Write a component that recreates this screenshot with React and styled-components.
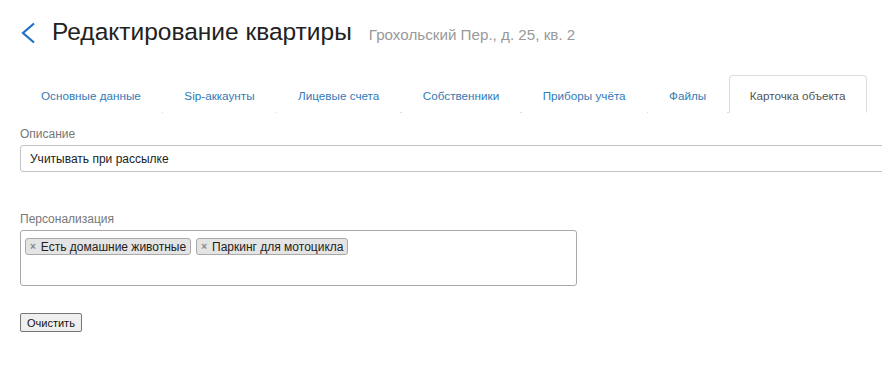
import React from 'react'
import styled, { createGlobalStyle } from 'styled-components'

const GlobalStyle = createGlobalStyle`
body{
    margin: 0;
    background: #fff;
    font-family: "Liberation Sans", Arial, sans-serif;
    overflow: hidden;
}
`

const tabs = ['Основные данные', 'Sip-аккаунты', 'Лицевые счета', 'Собственники', 'Приборы учёта', 'Файлы', 'Карточка объекта']
const tags = ['Есть домашние животные', 'Паркинг для мотоцикла']

function App() {
    return (
        <Page>
            <GlobalStyle />
            <Header>
                <BackLink href="#">
                    <svg width="16" height="22" viewBox="0 0 16 22">
                        <path d="M14 1.5 L3 11 L14 20.5" fill="none" stroke="#1f6fc5" strokeWidth="2.2" />
                    </svg>
                </BackLink>
                <Title>Редактирование квартиры</Title>
                <Subtitle>Грохольский Пер., д. 25, кв. 2</Subtitle>
            </Header>

            <Tabs>
                {tabs.map((t, i) => (
                    <Tab key={t} $active={i === tabs.length - 1}>{t}</Tab>
                ))}
            </Tabs>

            <Field>
                <Label>Описание</Label>
                <TextInput defaultValue="Учитывать при рассылке" />
            </Field>

            <Field $gap="40px">
                <Label>Персонализация</Label>
                <TagBox>
                    {tags.map(t => (
                        <Tag key={t}><span className="remove">×</span>{t}</Tag>
                    ))}
                </TagBox>
            </Field>

            <ClearButton>Очистить</ClearButton>
        </Page>
    )
}

export default App

const Page = styled.div`
padding: 0 20px;
width: 842px;
`

const Header = styled.div`
height: 64px;
display: flex;
align-items: center;
`

const BackLink = styled.a`
display: flex;
align-items: center;
width: 32px;
height: 22px;
margin-top: 1px;
`

const Title = styled.h1`
margin: 0;
font-size: 24.5px;
font-weight: 400;
color: #222;
white-space: nowrap;
`

const Subtitle = styled.span`
margin-left: 17px;
margin-top: 4px;
font-size: 15.2px;
color: #999;
white-space: nowrap;
`

const Tabs = styled.ul`
list-style: none;
margin: 11px 0 0;
padding: 0;
display: flex;
border-bottom: 1px solid #ddd;
`

const Tab = styled.li`
flex-shrink: 0;
white-space: nowrap;
margin-right: 1.5px;
margin-bottom: -1px;
padding: 12px 20px 9px;
font-size: 11.7px;
line-height: 15px;
color: ${p => p.$active ? '#555' : '#337ab7'};
border: 1px solid ${p => p.$active ? '#ddd' : 'transparent'};
border-bottom-color: ${p => p.$active ? '#fff' : 'transparent'};
border-radius: 4px 4px 0 0;
background: #fff;
cursor: pointer;
`

const Field = styled.div`
margin-top: ${p => p.$gap || '14px'};
display: flex;
flex-direction: column;
`

const Label = styled.label`
font-size: 12px;
color: #777;
margin-bottom: 4px;
`

const TextInput = styled.input`
box-sizing: border-box;
width: 880px;
height: 27px;
padding: 0 9px;
border: 1px solid #c4c4c4;
border-radius: 3px;
font-family: "Liberation Sans", Arial, sans-serif;
font-size: 12px;
color: #222;
outline: none;
`

const TagBox = styled.div`
box-sizing: border-box;
width: 557px;
height: 56px;
border: 1px solid #aaa;
border-radius: 3px;
padding: 7px 4px;
display: flex;
align-items: flex-start;
gap: 5px;
`

const Tag = styled.span`
display: flex;
align-items: center;
height: 15px;
padding: 0 4px;
background: #e4e4e4;
border: 1px solid #aaa;
border-radius: 3px;
font-size: 12px;
color: #222;
white-space: nowrap;
.remove{
    color: #888;
    font-size: 10px;
    font-weight: 700;
    margin-right: 5px;
}
`

const ClearButton = styled.button`
margin-top: 27px;
height: 19px;
padding: 0 6px;
font-family: "Liberation Sans", Arial, sans-serif;
font-size: 11px;
color: #111;
background: #efefef;
border: 1px solid #767676;
border-radius: 2px;
`
